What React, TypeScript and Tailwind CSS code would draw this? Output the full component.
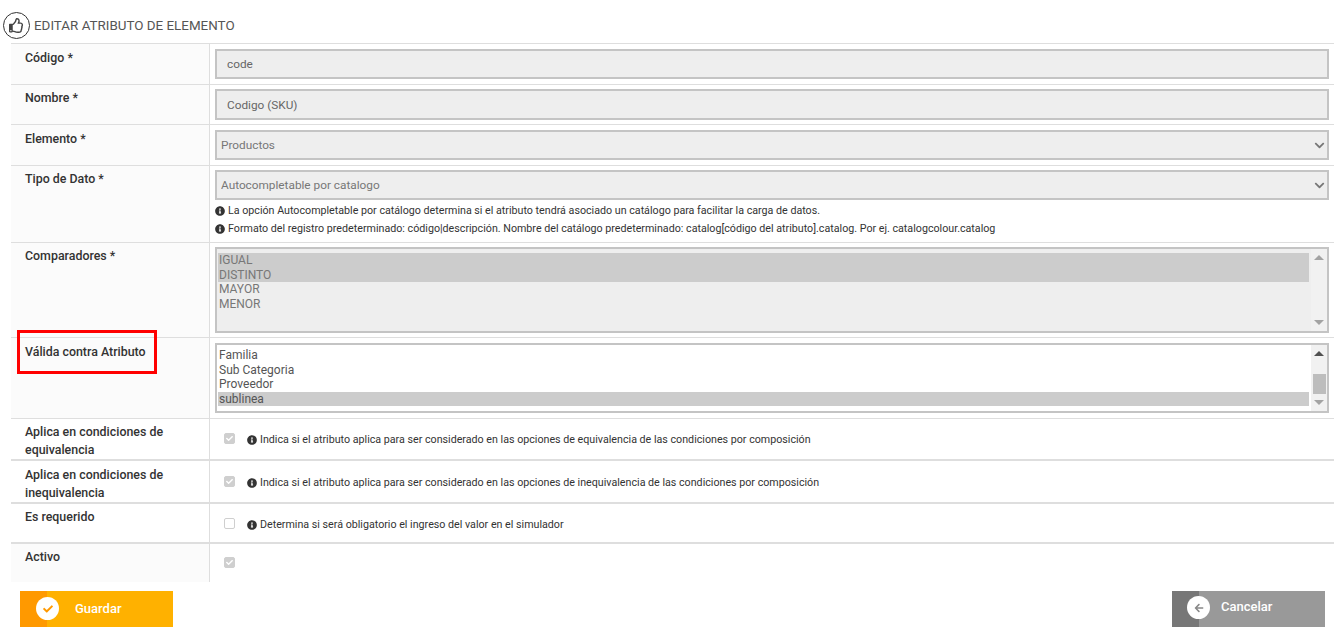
import React from "react";
import { FaArrowLeft, FaCheck, FaChevronDown, FaInfoCircle, FaRegThumbsUp } from "react-icons/fa";

const Label: React.FC<{ text: string; white?: boolean; top?: string; children?: React.ReactNode }> = ({ text, white, top = "pt-[4px]", children }) => (
  <div className={`relative w-[199px] shrink-0 self-stretch border-r border-[#dedede] pl-[14px] pr-2 text-[12.4px] font-medium leading-[18px] text-[#333] ${top} ${white ? "bg-white" : "bg-[#fbfbfb]"}`}>
    {text}
    {children}
  </div>
);

const Hint: React.FC<{ text: string }> = ({ text }) => (
  <p className="flex items-center gap-[3px] text-[10.7px] leading-[18px] text-[#333]">
    <FaInfoCircle className="h-[10px] w-[10px] shrink-0 text-[#333]" />
    <span>{text}</span>
  </p>
);

const TextField: React.FC<{ value: string; height?: string }> = ({ value, height = "h-[30px]" }) => (
  <input
    disabled
    value={value}
    className={`w-full border-2 border-[#c4c4c4] bg-[#eeeeee] pl-[10px] text-[11.8px] text-[#666] outline-none ${height}`}
  />
);

const SelectField: React.FC<{ value: string }> = ({ value }) => (
  <div className="relative h-[30px] w-full">
    <select disabled value={value} className="h-full w-full appearance-none border-2 border-[#c4c4c4] bg-[#eeeeee] pl-[4px] pt-[2px] text-[11.8px] text-[#777] opacity-100 outline-none">
      <option value={value}>{value}</option>
    </select>
    <FaChevronDown className="absolute right-[4px] top-[10px] h-[11px] w-[11px] text-[#777]" />
  </div>
);

const ListBox: React.FC<{ items: string[]; selected: string[]; disabled?: boolean; height: string; thumb?: boolean; top: string }> = ({ items, selected, disabled, height, thumb, top }) => (
  <div className={`flex w-full border-2 border-[#c4c4c4] ${height} ${disabled ? "bg-[#eeeeee]" : "bg-white"}`}>
    <div className={`flex-1 pl-px ${top}`}>
      {items.map((item) => (
        <div
          key={item}
          className={`h-[14.6px] pl-[1px] text-[12px] leading-[14.6px] ${selected.includes(item) ? "bg-[#cccccc]" : ""} ${disabled ? "text-[#777]" : "text-[#555]"}`}
        >
          {item}
        </div>
      ))}
    </div>
    <div className="relative ml-[2px] w-[16px] shrink-0 bg-[#f1f1f1]">
      <span className={`absolute left-[3px] top-[6px] h-0 w-0 border-x-[5px] border-b-[5px] border-x-transparent ${disabled ? "border-b-[#a3a3a3]" : "border-b-[#505050]"}`} />
      {thumb && <span className="absolute left-[2px] top-[29px] h-[20px] w-[13px] bg-[#bdbdbd]" />}
      <span className="absolute bottom-[6px] left-[3px] h-0 w-0 border-x-[5px] border-t-[5px] border-x-transparent border-t-[#a3a3a3]" />
    </div>
  </div>
);

const Check: React.FC<{ checked?: boolean }> = ({ checked }) => (
  <span className={`mb-[3px] flex h-[11px] w-[11px] shrink-0 items-center justify-center rounded-[2px] border ${checked ? "border-[#cfcfcf] bg-[#cfcfcf]" : "border-[#cfcfcf] bg-white"}`}>
    {checked && <FaCheck className="h-[7px] w-[7px] text-white" />}
  </span>
);

const CheckRow: React.FC<{ label: string; labelTop?: string; hint?: string; checked?: boolean; className: string; white?: boolean; top: string }> = ({ label, labelTop, hint, checked, className, white, top }) => (
  <div className={`flex ${className}`}>
    <Label text={label} white={white} top={labelTop} />
    <div className={`flex flex-1 items-center gap-[12px] self-start pl-[14px] ${top}`}>
      <Check checked={checked} />
      {hint && <Hint text={hint} />}
    </div>
  </div>
);

const App: React.FC = () => {
  return (
    <div className="h-[633px] w-[1341px] overflow-hidden bg-white font-['Roboto',sans-serif]">
      <div className="flex h-[43px] items-center pl-[3px] pt-[7px]">
        <span className="flex h-[27px] w-[27px] items-center justify-center rounded-full border border-[#333]">
          <FaRegThumbsUp className="h-[15px] w-[15px] text-[#444]" />
        </span>
        <h1 className="ml-[4px] pt-[2px] text-[13.4px] font-normal text-[#555]">EDITAR ATRIBUTO DE ELEMENTO</h1>
      </div>

      <div className="ml-[11px] w-[1323px]">
        <div className="flex h-[41px] items-center border-t border-[#dedede]">
          <Label text="Código *" top="pt-[5px]" />
          <div className="flex-1 pl-[5px] pr-[5px]"><TextField value="code" /></div>
        </div>
        <div className="flex h-[40px] items-center border-t border-[#dedede]">
          <Label text="Nombre *" />
          <div className="flex-1 pl-[5px] pr-[5px]"><TextField value="Codigo (SKU)" height="h-[31px]" /></div>
        </div>
        <div className="flex h-[41px] items-center border-t border-[#dedede]">
          <Label text="Elemento *" top="pt-[5px]" />
          <div className="flex-1 pl-[5px] pr-[5px]"><SelectField value="Productos" /></div>
        </div>
        <div className="flex h-[77px] border-t border-[#dedede]">
          <Label text="Tipo de Dato *" />
          <div className="flex-1 px-[5px] pt-[4px]">
            <SelectField value="Autocompletable por catalogo" />
            <div className="pt-[2px]">
              <Hint text="La opción Autocompletable por catálogo determina si el atributo tendrá asociado un catálogo para facilitar la carga de datos." />
              <Hint text="Formato del registro predeterminado: código|descripción. Nombre del catálogo predeterminado: catalog[código del atributo].catalog. Por ej. catalogcolour.catalog" />
            </div>
          </div>
        </div>
        <div className="flex h-[95px] border-t border-[#dedede]">
          <Label text="Comparadores *" />
          <div className="flex-1 px-[5px] pt-[4px]">
            <ListBox disabled top="pt-[4px]" height="h-[86px]" items={["IGUAL", "DISTINTO", "MAYOR", "MENOR"]} selected={["IGUAL", "DISTINTO"]} />
          </div>
        </div>
        <div className="flex h-[81px] border-t border-[#dedede]">
          <Label text="Válida contra Atributo" top="pt-[5px]">
            <span className="absolute left-[6px] top-[-8px] h-[44px] w-[140px] border-[3px] border-[#ff0000]" />
          </Label>
          <div className="flex-1 px-[5px] pt-[5px]">
            <ListBox top="pt-[3px]" height="h-[70px]" thumb items={["Familia", "Sub Categoria", "Proveedor", "sublinea"]} selected={["sublinea"]} />
          </div>
        </div>
        <CheckRow className="h-[41px] border-t border-[#dedede]" white label="Aplica en condiciones de equivalencia" hint="Indica si el atributo aplica para ser considerado en las opciones de equivalencia de las condiciones por composición" checked top="pt-[12px]" />
        <CheckRow className="h-[43px] border-t-2 border-[#dedede]" white labelTop="pt-[5px]" label="Aplica en condiciones de inequivalencia" hint="Indica si el atributo aplica para ser considerado en las opciones de inequivalencia de las condiciones por composición" top="pt-[13px]" checked />
        <CheckRow className="h-[40px] border-t-2 border-[#dedede]" white label="Es requerido" hint="Determina si será obligatorio el ingreso del valor en el simulador" top="pt-[12px]" />
        <CheckRow className="h-[40px] border-t-2 border-[#dedede]" label="Activo" top="pt-[13px]" checked />
      </div>

      <div className="flex items-start justify-between pl-[20px] pr-[16px] pt-[9px]">
        <button className="relative flex h-[36px] w-[153px] items-center bg-[#ffb100] pl-[55px] text-[13px] font-medium text-white">
          <span className="absolute inset-y-0 left-0 w-[27px] bg-[#ff9900]" />
          <span className="absolute left-[16px] top-[6px] flex h-[23px] w-[23px] items-center justify-center rounded-full bg-white">
            <FaCheck className="h-[10px] w-[10px] text-[#ff9900]" />
          </span>
          Guardar
        </button>
        <button className="relative flex h-[36px] w-[153px] items-center bg-[#999999] pb-[5px] pl-[49px] text-[13px] font-medium text-white">
          <span className="absolute inset-y-0 left-0 w-[27px] bg-[#777777]" />
          <span className="absolute left-[15px] top-[5px] flex h-[23px] w-[23px] items-center justify-center rounded-full bg-white">
            <FaArrowLeft className="h-[10px] w-[10px] text-[#888]" />
          </span>
          Cancelar
        </button>
      </div>
    </div>
  );
};

export default App;
